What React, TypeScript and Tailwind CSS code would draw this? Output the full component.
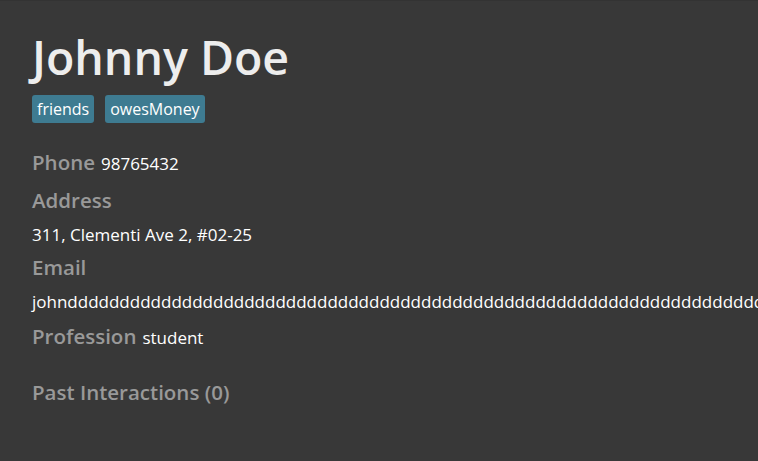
export default function App() {
  const email = "john" + "d".repeat(80) + "@example.com";
  return (
    <div className="w-[758px] h-[461px] bg-[#383838] overflow-hidden border-t border-[#333333]" style={{ fontFamily: '"Open Sans", "Noto Sans", sans-serif' }}>
      <div className="pl-[32px] pt-[26px]">
        <div className="text-[46.5px] leading-[60px] text-[#ededed] font-semibold whitespace-nowrap">Johnny Doe</div>
        <div className="flex gap-[11px] mt-[8px]">
          <span className="bg-[#3e7b91] text-white text-[16px] leading-[28px] px-[5px] rounded-[3px]">friends</span>
          <span className="bg-[#3e7b91] text-white text-[16px] leading-[28px] px-[5px] rounded-[3px]">owesMoney</span>
        </div>
        <div className="mt-[25px] flex items-baseline whitespace-nowrap">
          <span className="text-[20.5px] font-semibold text-[#999999] leading-[28px]">Phone</span>
          <span className="ml-[6px] text-[17px] text-white">98765432</span>
        </div>
        <div className="mt-[9px] text-[20.5px] font-semibold text-[#999999] leading-[28px]">Address</div>
        <div className="mt-[9px] text-[17px] text-white leading-[24px] whitespace-nowrap">311, Clementi Ave 2, #02-25</div>
        <div className="mt-[6px] text-[20.5px] font-semibold text-[#999999] leading-[28px]">Email</div>
        <div className="mt-[9px] text-[17px] text-white leading-[24px] whitespace-nowrap">{email}</div>
        <div className="mt-[8px] flex items-baseline whitespace-nowrap">
          <span className="text-[20.5px] font-semibold text-[#999999] leading-[28px]">Profession</span>
          <span className="ml-[6px] text-[17px] text-white">student</span>
        </div>
        <div className="mt-[28px] text-[20.5px] font-semibold text-[#999999] leading-[28px]">Past Interactions (0)</div>
      </div>
    </div>
  );
}
